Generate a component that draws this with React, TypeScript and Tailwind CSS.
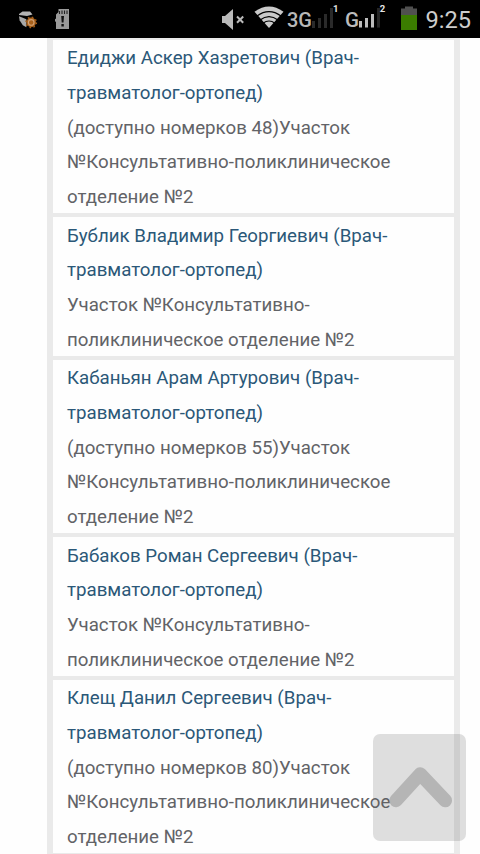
const doctors = [
  { name: ["Едиджи Аскер Хазретович (Врач-", "травматолог-ортопед)"], info: ["(доступно номерков 48)Участок", "№Консультативно-поликлиническое", "отделение №2"] },
  { name: ["Бублик Владимир Георгиевич (Врач-", "травматолог-ортопед)"], info: ["Участок №Консультативно-", "поликлиническое отделение №2"] },
  { name: ["Кабаньян Арам Артурович (Врач-", "травматолог-ортопед)"], info: ["(доступно номерков 55)Участок", "№Консультативно-поликлиническое", "отделение №2"] },
  { name: ["Бабаков Роман Сергеевич (Врач-", "травматолог-ортопед)"], info: ["Участок №Консультативно-", "поликлиническое отделение №2"] },
  { name: ["Клещ Данил Сергеевич (Врач-", "травматолог-ортопед)"], info: ["(доступно номерков 80)Участок", "№Консультативно-поликлиническое", "отделение №2"] },
];

function StatusBar() {
  return (
    <header className="flex h-[38px] shrink-0 items-center bg-black text-[#c4c4c4]">
      <svg className="ml-[18px] h-[38px] w-5" viewBox="18 0 20 38">
        <path d="M19 14l3.5-2.5h7.5l2.5 3-5.5 1.6-8-1.1z" fill="#b4b4b4" />
        <path d="M19 16.2l7.4 3v8l-3.6-2-3.2-5z" fill="#a8a8a8" />
        <circle cx="31.2" cy="22.4" r="5.2" fill="none" stroke="#a9611b" strokeWidth="1.4" strokeDasharray="1.6 2.48" />
        <circle cx="31.2" cy="22.4" r="4.8" fill="#a9611b" />
        <circle cx="31.2" cy="22.4" r="2.8" fill="none" stroke="#d0a073" strokeWidth="1.1" />
      </svg>
      <svg className="ml-[17px] h-[38px] w-4" viewBox="55 0 16 38">
        <path d="M58.5 9H69v20H56v-7l-1-.8v-2l1-.8v-4l2.5-2.4z" fill="#9a9a9a" />
        <path d="M59.5 11v3M62 10.5v3.5M64.5 10.5v3.5M67 10.5v3.5" stroke="#222" strokeWidth="1.1" />
        <path d="M61.2 16h2.8l-.5 6.5h-1.8zM61.4 24h2.4v2.5h-2.4z" fill="#111" />
      </svg>
      <svg className="ml-[150px] h-[38px] w-[26px]" viewBox="221 0 26 38">
        <path d="M222 16h3l8-7v21l-8-7h-3z" fill="#bababa" />
        <path d="M237 16.5l6.2 6.2M243.2 16.5l-6.2 6.2" stroke="#bababa" strokeWidth="2" />
      </svg>
      <svg className="ml-[7px] h-[38px] w-[30px]" viewBox="254 0 30 38">
        <path d="M269 28L254.5 11.7Q269 1.3 283.5 11.7z" fill="#cacaca" />
        <path d="M257 16Q269 7.3 281 16M260 20Q269 13.2 278 20M263 23.3Q269 18.7 275 23.3" fill="none" stroke="#000" strokeWidth="1.2" />
      </svg>
      <svg className="ml-[3px] h-[38px] w-[52px]" viewBox="287 0 52 38" fontFamily="Roboto, sans-serif" fill="#b8b8b8">
        <text x="287" y="27.3" fontSize="20.5" fontWeight="500" textLength="25" lengthAdjust="spacingAndGlyphs">3G</text>
        <path d="M312 21h3v7h-3zM318 18h3v10h-3zM324 14h3v14h-3zM330 8h3v20h-3z" fill="#2a2a2a" />
        <text x="333" y="12" fontSize="9.5" fontWeight="700" fill="#e4e4e4">1</text>
      </svg>
      <svg className="ml-[6px] h-[38px] w-[42px]" viewBox="345 0 42 38" fontFamily="Roboto, sans-serif" fill="#bcbcbc">
        <text x="345" y="27.3" fontSize="20.5" fontWeight="500" textLength="14" lengthAdjust="spacingAndGlyphs">G</text>
        <path d="M359 21h3v6.6h-3zM365 18h3v9.6h-3zM371 14h3v13.6h-3z" />
        <path d="M377 8h3v19.6h-3z" fill="#262626" />
        <text x="379.7" y="12" fontSize="9.5" fontWeight="700" fill="#e4e4e4">2</text>
      </svg>
      <svg className="ml-[13px] h-[38px] w-[18px]" viewBox="400 0 18 38">
        <path d="M401 8.5h4V6.5h8v2h4V15h-16z" fill="#505050" />
        <path d="M401 15h16v15h-16z" fill="#3b7c00" />
      </svg>
      <svg className="ml-[7px] h-[38px] w-[50px]" viewBox="425 0 50 38">
        <text x="425.6" y="28" fontFamily="Roboto, sans-serif" fontSize="24" textLength="45.5" lengthAdjust="spacingAndGlyphs" fill="#cdcdcd">9:25</text>
      </svg>
    </header>
  );
}

export default function App() {
  return (
    <div className="relative flex h-[854px] w-[480px] flex-col overflow-hidden bg-[#fefefe] font-['Roboto',sans-serif]">
      <StatusBar />
      <main className="ml-[47px] flex w-[413px] flex-1 flex-col gap-1 overflow-hidden bg-[#eaeaea] pt-0.5 pr-[6.5px] pl-[6px]">
        {doctors.map((d) => (
          <article key={d.name[0]} className="shrink-0 bg-[#fefefe] pt-[1.3px] pl-[14px] text-[18.7px] leading-[34.667px] whitespace-nowrap">
            <div className="text-[#2b5878]">
              {d.name.map((line) => <div key={line}>{line}</div>)}
            </div>
            <div className="-mb-[1.3px] text-[#626367]">
              {d.info.map((line) => <div key={line}>{line}</div>)}
            </div>
          </article>
        ))}
      </main>
      <button aria-label="Наверх" className="absolute top-[734px] left-[373px] h-[107px] w-[93px] rounded-[7px] bg-[#5d5d5d]/20">
        <svg className="h-full w-full" viewBox="373 734 93 107">
          <path d="M396 800.5L420.2 774L445.3 800.5" fill="none" stroke="#9a9a9a" strokeOpacity=".6" strokeWidth="13.5" strokeLinecap="round" strokeLinejoin="round" />
        </svg>
      </button>
    </div>
  );
}
